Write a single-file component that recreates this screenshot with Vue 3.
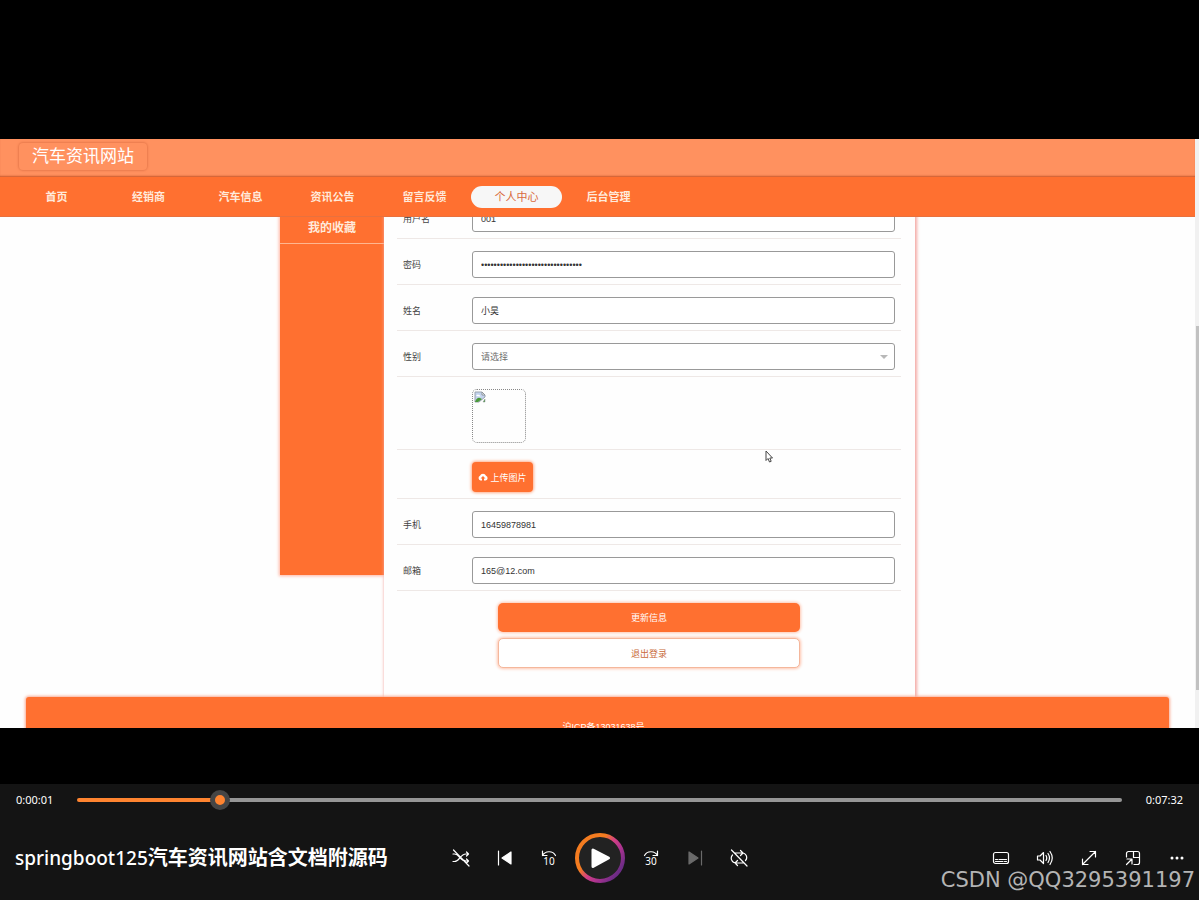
<script setup>
import { ref, computed } from 'vue'

const navItems = ['首页', '经销商', '汽车信息', '资讯公告', '留言反馈', '个人中心', '后台管理']
const activeItem = ref('个人中心')

const user = ref({
  account: '001',
  password: '0123456789abcdef0123456789abcdef',
  name: '小昊',
  gender: '',
  phone: '16459878981',
  email: '165@12.com'
})

const progress = ref(130)
const played = computed(() => ({ '--played': progress.value / 10 + '%' }))
</script>

<template>
  <div class="player">
    <main class="stage">
      <div class="frame">
        <div class="site">
          <header class="brand">
            <h1 class="brand-name">汽车资讯网站</h1>
          </header>
          <nav class="nav">
            <a
              v-for="item in navItems"
              :key="item"
              href="#"
              class="nav-link"
              :class="{ active: item === activeItem }"
              @click.prevent="activeItem = item"
            >{{ item }}</a>
          </nav>

          <div class="viewport">
            <div class="content">
              <aside class="sidebar">
                <a href="#" class="side-link">我的收藏</a>
              </aside>

              <form class="panel" @submit.prevent>
                <div class="row">
                  <label for="account">用户名</label>
                  <input id="account" v-model="user.account" class="field" type="text">
                </div>
                <div class="row">
                  <label for="password">密码</label>
                  <input id="password" v-model="user.password" class="field" type="password">
                </div>
                <div class="row">
                  <label for="name">姓名</label>
                  <input id="name" v-model="user.name" class="field" type="text">
                </div>
                <div class="row">
                  <label for="gender">性别</label>
                  <div class="select-wrap">
                    <select id="gender" v-model="user.gender" class="field select">
                      <option value="">请选择</option>
                      <option>男</option>
                      <option>女</option>
                    </select>
                    <span class="caret"></span>
                  </div>
                </div>
                <div class="row offset">
                  <div class="avatar">
                    <svg width="12" height="12" viewBox="0 0 12 12">
                      <path d="M1 1h7l3 3v2L5 11H1z" fill="#c3d3ee" stroke="#9aa3ae" stroke-width="1" />
                      <path d="M8 1v3h3z" fill="#fff" stroke="#8d949c" stroke-width="1" />
                      <path d="M2 5q1.500-2.500 3-1 1.500 0 1.500 1.500z" fill="#fff" />
                      <path d="M1 11q2-5 5-4l2 1-4 3z" fill="#4b9a3a" />
                      <path d="M9 11l2-3v3z" fill="#4b9a3a" stroke="#8d949c" stroke-width=".5" />
                    </svg>
                  </div>
                </div>
                <div class="row offset">
                  <button type="button" class="upload">
                    <svg width="10" height="8" viewBox="0 0 20 16">
                      <path d="M5 15a5 5 0 0 1-1-9.400A6.500 6.500 0 0 1 16 5.500 5 5 0 0 1 15.500 15H12v-4h3l-5-5-5 5h3v4z" fill="#fff" />
                    </svg>
                    <span>上传图片</span>
                  </button>
                </div>
                <div class="row">
                  <label for="phone">手机</label>
                  <input id="phone" v-model="user.phone" class="field" type="text">
                </div>
                <div class="row">
                  <label for="email">邮箱</label>
                  <input id="email" v-model="user.email" class="field" type="text">
                </div>
                <div class="actions">
                  <button type="submit" class="action primary">更新信息</button>
                  <button type="button" class="action plain">退出登录</button>
                </div>
                <svg class="pointer" width="9" height="13" viewBox="0 0 9 13">
                  <path d="M1 1v9.500l2-2 1.500 3.500 1.700-.7L4.800 8H7.500z" fill="#fff" stroke="#444" stroke-width="1" />
                </svg>
              </form>
            </div>
            <footer class="footer">沪ICP备13031638号</footer>
          </div>
        </div>
        <div class="scrollbar">
          <div class="scroll-thumb"></div>
        </div>
      </div>
    </main>

    <section class="controls">
      <div class="timeline">
        <span class="time">0:00:01</span>
        <input v-model.number="progress" class="seek" type="range" min="0" max="1000" aria-label="播放进度" :style="played">
        <span class="time end">0:07:32</span>
      </div>

      <div class="toolbar">
        <h2 class="title"><span class="latin">springboot125</span>汽车资讯网站含文档附源码</h2>

        <div class="group">
          <button type="button" class="icon" aria-label="随机播放">
            <svg width="18" height="18" viewBox="0 0 18 18">
              <path d="M1 5h1.500c5 0 5.500 7 11.500 7h2.500M1 12.500h1.500c5 0 5.500-7.500 11.500-7.500h2.500M14.500 3l2 2-2 2M14.500 10l2 2-2 2M1.500 1l15.500 16" />
            </svg>
          </button>
          <button type="button" class="icon" aria-label="上一个">
            <svg width="18" height="18" viewBox="0 0 18 18">
              <path d="M2.500 2v14" />
              <path d="M15 3v12L6 9z" class="solid" />
            </svg>
          </button>
          <button type="button" class="icon" aria-label="后退 10 秒">
            <svg width="18" height="18" viewBox="0 0 18 18">
              <path d="M2.500 2v4.500H7M2.500 6.500C5 2 12.500 1 15.500 6.500" />
              <text x="9" y="16">10</text>
            </svg>
          </button>
          <button type="button" class="play" aria-label="播放">
            <svg width="50" height="50" viewBox="0 0 50 50">
              <defs>
                <linearGradient id="ring" x1="0.100" y1="0.200" x2="0.900" y2="0.800">
                  <stop offset="0.300" stop-color="#f47c20" />
                  <stop offset="0.520" stop-color="#d13f86" />
                  <stop offset="0.750" stop-color="#a8328f" />
                  <stop offset="1" stop-color="#6d2c86" />
                </linearGradient>
              </defs>
              <circle cx="25" cy="25" r="23" fill="#222" stroke="url(#ring)" stroke-width="4" />
              <path d="M18 17v16.500L33.500 25z" fill="#fff" stroke="#fff" stroke-width="3" stroke-linejoin="round" />
            </svg>
          </button>
          <button type="button" class="icon" aria-label="前进 30 秒">
            <svg width="18" height="18" viewBox="0 0 18 18">
              <path d="M15.500 2v4.500H11M15.500 6.500C13 2 5.500 1 2.500 6.500" />
              <text x="9" y="16">30</text>
            </svg>
          </button>
          <button type="button" class="icon dim" aria-label="下一个">
            <svg width="18" height="18" viewBox="0 0 18 18">
              <path d="M15.500 2v14" />
              <path d="M3 3v12l9-6z" class="solid" />
            </svg>
          </button>
          <button type="button" class="icon" aria-label="重复">
            <svg width="18" height="18" viewBox="0 0 18 18">
              <path d="M5 4h7a4.500 4.500 0 0 1 3.500 7.500M10.500 1.500L13 4l-2.500 2.500M13 14H6A4.800 4.800 0 0 1 2.500 6M7.500 11.500L5 14l2.500 2.500M1.500 1l15.500 16" />
            </svg>
          </button>
        </div>

        <div class="group right">
          <button type="button" class="icon" aria-label="字幕">
            <svg width="18" height="18" viewBox="0 0 18 18">
              <rect x="1.500" y="3.500" width="15" height="11" rx="2" />
              <path d="M3.500 10.500h2M7 10.500h7.500M3.500 12.500h7.500M12.500 12.500h2" />
            </svg>
          </button>
          <button type="button" class="icon" aria-label="音量">
            <svg width="18" height="18" viewBox="0 0 18 18">
              <path d="M1.500 7v4H4l3.500 3.500v-11L4 7zM10 6.500q1.500 2.500 0 5M12 4.500q3 4.500 0 9M14 2.500q4.500 6.500 0 13" />
            </svg>
          </button>
          <button type="button" class="icon" aria-label="全屏">
            <svg width="18" height="18" viewBox="0 0 18 18">
              <path d="M2.500 15.500l13-13M10 2.500h5.500V8M2.500 10v5.500H8" />
            </svg>
          </button>
          <button type="button" class="icon" aria-label="迷你播放器">
            <svg width="18" height="18" viewBox="0 0 18 18">
              <path d="M2.500 8V4.500a2 2 0 0 1 2-2h9a2 2 0 0 1 2 2v9a2 2 0 0 1-2 2H10M9.500 2.500v6h6M2.500 15.500l5-5M3 10h5v5" />
            </svg>
          </button>
          <button type="button" class="icon" aria-label="更多">
            <svg width="18" height="18" viewBox="0 0 18 18">
              <circle cx="4" cy="9" r="1.500" class="dot" />
              <circle cx="9" cy="9" r="1.500" class="dot" />
              <circle cx="14" cy="9" r="1.500" class="dot" />
            </svg>
          </button>
        </div>
      </div>
      <span class="watermark">CSDN @QQ3295391197</span>
    </section>
  </div>
</template>

<style>
body {
  background: #000;
}
</style>

<style scoped>
.player,
.player * {
  box-sizing: border-box;
}

.player {
  display: flex;
  flex-direction: column;
  min-height: 100vh;
  background: #000;
  font-family: "Liberation Sans", "Noto Sans CJK SC", sans-serif;
}

button,
input,
select {
  margin: 0;
  font-family: inherit;
}

a {
  text-decoration: none;
}

/* Recorded page */
.stage {
  flex: 1;
  display: flex;
  padding: 139px 0 56px;
}

.frame {
  flex: 1;
  display: flex;
  background: #fefefe;
}

.site {
  flex: 1;
  display: flex;
  flex-direction: column;
}

.brand {
  display: flex;
  align-items: center;
  height: 38px;
  padding: 0 19px 4px;
  background: #ff915f;
  box-shadow: inset 0 -2px 2px -1px #c9592c;
}

.brand-name {
  margin: 0;
  padding: 0 13px;
  border-radius: 4px;
  box-shadow: 0 0 2px 1px #e97b4d;
  color: #fff;
  font-size: 17px;
  font-weight: 400;
  line-height: 27px;
}

.nav {
  display: flex;
  align-items: center;
  gap: 1px;
  height: 40px;
  padding: 0 11px;
  background: #ff7030;
  border-bottom: 1px solid #e8713e;
}

.nav-link {
  width: 91px;
  border-radius: 11px;
  color: #ffeadb;
  font-size: 11px;
  font-weight: 700;
  line-height: 22px;
  text-align: center;
}

.nav-link.active {
  background: #f7f7f7;
  color: #d96a3c;
  font-weight: 400;
}

.viewport {
  flex: 1 1 0;
  height: 0;
  min-height: 511px;
  overflow: hidden;
}

.content {
  display: flex;
  justify-content: center;
  align-items: flex-start;
  margin-top: -24px;
}

.sidebar {
  width: 104px;
  min-height: 382px;
  padding-top: 20px;
  background: #ff7030;
  box-shadow: 0 0 3px 1px #ffb4a0;
}

.side-link {
  display: block;
  height: 31px;
  border-bottom: 1px solid #ffb68f;
  color: #ffeadb;
  font-size: 12px;
  font-weight: 700;
  line-height: 31px;
  text-align: center;
}

.panel {
  position: relative;
  width: 531px;
  padding: 0 14px 29px 13px;
  background: #fefefe;
  box-shadow: 1px 0 3px 1px #f3a9a4;
}

.row {
  display: flex;
  align-items: center;
  padding: 12px 6px 6px;
  border-bottom: 1px solid #eee8e6;
}

.row.offset {
  padding-left: 75px;
}

.row label {
  width: 69px;
  color: #444;
  font-size: 9px;
}

.field {
  flex: 1;
  width: 100%;
  min-width: 0;
  height: 27px;
  padding: 0 8px;
  border: 1px solid #999;
  border-radius: 3px;
  background: #fff;
  color: #333;
  font-size: 9px;
  outline: none;
}

.select-wrap {
  position: relative;
  flex: 1;
  display: flex;
}

.select {
  appearance: none;
  color: #707070;
}

.caret {
  position: absolute;
  top: 12px;
  right: 7px;
  border: 4px solid transparent;
  border-top-color: #b8b8b8;
  border-bottom-width: 0;
  pointer-events: none;
}

.avatar {
  width: 54px;
  height: 54px;
  padding: 1px;
  border: 1px dotted #888;
  border-radius: 5px;
}

.avatar svg {
  display: block;
}

.upload {
  display: flex;
  align-items: center;
  justify-content: center;
  gap: 2px;
  width: 61px;
  height: 30px;
  padding: 0;
  border: 0;
  border-radius: 4px;
  background: #ff7030;
  box-shadow: 0 0 3px 1px #ffad8b;
  color: #fff;
  font-size: 9px;
}

.actions {
  display: flex;
  flex-direction: column;
  align-items: center;
  gap: 6px;
  padding-top: 12px;
}

.action {
  width: 60%;
  height: 29px;
  padding: 0;
  border: 0;
  border-radius: 5px;
  box-shadow: 0 0 3px 1px #ffc4ae;
  font-size: 9px;
}

.primary {
  background: #ff7030;
  color: #fff;
}

.plain {
  height: 30px;
  border: 1px solid #f4b79c;
  background: #fff;
  color: #c96a3a;
}

.pointer {
  position: absolute;
  top: 257px;
  left: 381px;
}

.footer {
  position: relative;
  margin: 0 26px;
  padding: 24px 0 24px 12px;
  border-radius: 3px;
  background: #ff7030;
  box-shadow: 0 0 3px 1px #f9ab93;
  color: #fff;
  font-size: 9px;
  line-height: 12px;
  text-align: center;
}

.scrollbar {
  display: flex;
  width: 4px;
  padding: 187px 0 38px 1px;
  background: #f1f1f1;
}

.scroll-thumb {
  flex: 1;
  background: #c1c1c1;
}

/* Player controls */
.controls {
  position: relative;
  background: #141414;
  color: #fff;
}

.timeline {
  display: flex;
  align-items: center;
  height: 32px;
  padding: 0 16px;
}

.time {
  width: 61px;
  font-family: "Noto Sans", sans-serif;
  font-size: 11px;
  line-height: 16px;
}

.time.end {
  text-align: right;
}

.seek {
  flex: 1;
  height: 20px;
  appearance: none;
  background: transparent;
  outline: none;
}

.seek::-webkit-slider-runnable-track {
  height: 4px;
  border-radius: 2px;
  background: linear-gradient(to right, #ff8430 var(--played), #969696 var(--played));
}

.seek::-webkit-slider-thumb {
  appearance: none;
  width: 20px;
  height: 20px;
  margin-top: -8px;
  border: 5px solid #454545;
  border-radius: 50%;
  background: #ff8430;
}

.toolbar {
  display: grid;
  grid-template-columns: 1fr auto 1fr;
  align-items: center;
  height: 84px;
}

.title {
  min-width: 0;
  margin: 0;
  padding-left: 15px;
  font-family: "Noto Sans", "Noto Sans CJK SC", sans-serif;
  font-size: 20px;
  font-weight: 700;
  line-height: 28px;
  white-space: nowrap;
}

.latin {
  font-size: 19px;
  font-weight: 500;
}

.group {
  display: flex;
  align-items: center;
}

.group.right {
  justify-content: flex-end;
}

.icon,
.play {
  display: flex;
  align-items: center;
  justify-content: center;
  padding: 0;
  border: 0;
  background: transparent;
  color: #fff;
}

.icon {
  width: 44px;
  height: 44px;
}

.play {
  width: 58px;
  height: 50px;
}

.icon svg {
  fill: none;
  stroke: currentColor;
  stroke-width: 1.2;
  stroke-linecap: round;
  stroke-linejoin: round;
}

.icon .solid {
  fill: currentColor;
}

.icon .dot {
  fill: currentColor;
  stroke: none;
}

.icon text {
  fill: currentColor;
  stroke: none;
  font-family: "Noto Sans", sans-serif;
  font-size: 10px;
  font-weight: 400;
  text-anchor: middle;
}

.icon.dim {
  color: #6a6a6a;
}

.watermark {
  position: absolute;
  right: 4px;
  bottom: 8px;
  color: #b4b4b4;
  font-family: "DejaVu Sans", sans-serif;
  font-size: 21px;
  line-height: 24px;
  pointer-events: none;
}
</style>
